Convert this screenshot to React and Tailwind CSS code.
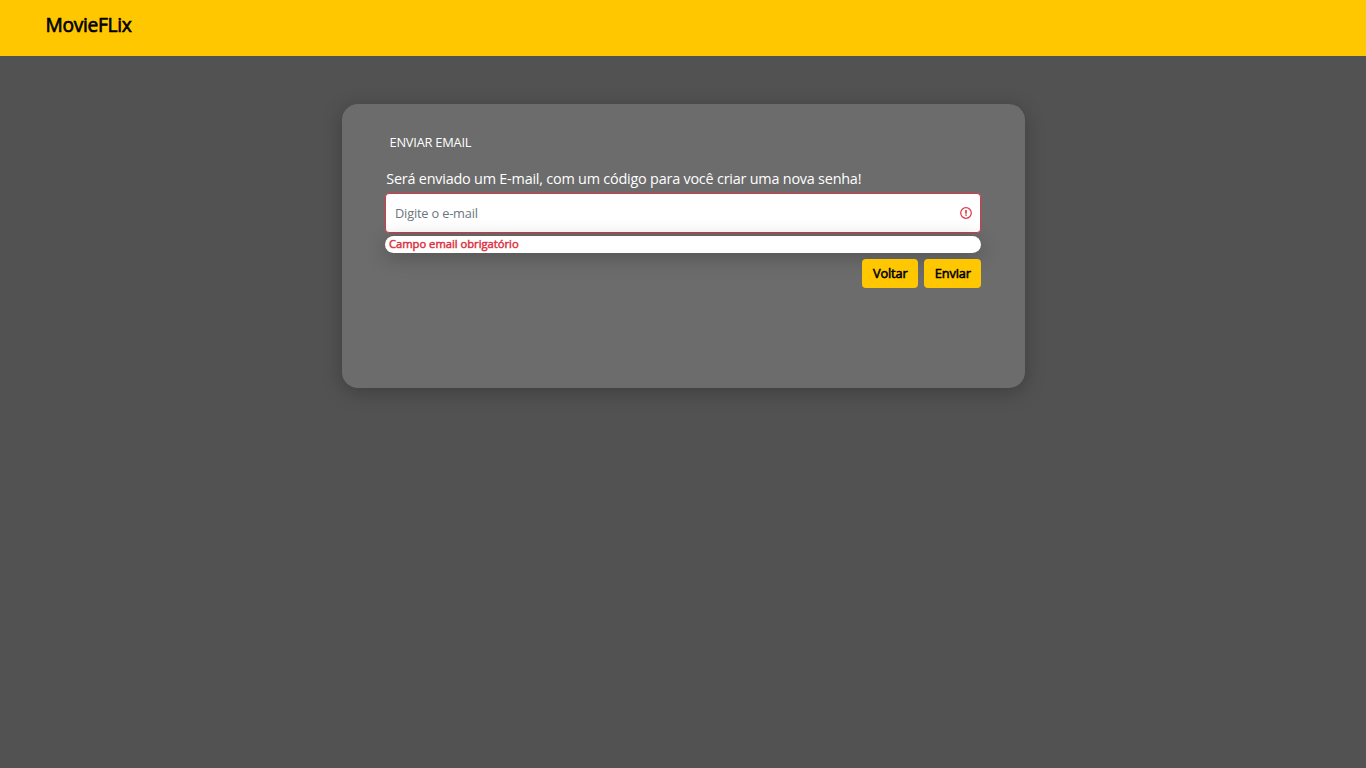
export default function App() {
  return (
    <div className="min-h-screen bg-[#525252] font-['Open_Sans',sans-serif]">
      <header className="h-14 bg-[#ffc700] pl-[45.5px] pt-[10px]">
        <h1 className="w-fit text-[19.2px] leading-[29px] font-normal tracking-[-0.3px] text-black [-webkit-text-stroke:0.65px_#000]">MovieFLix</h1>
      </header>
      <main className="mx-auto mt-12 h-[284px] w-[683px] rounded-[16px] bg-[#6c6c6c] pl-[43px] pr-[44px] pt-[29px] shadow-[0_4px_20px_rgba(0,0,0,0.25)]">
        <h2 className="pl-[5px] text-[12.8px] leading-[19px] tracking-[-0.2px] text-white">ENVIAR EMAIL</h2>
        <p className="mt-[16px] pl-[1.8px] text-[14.4px] leading-[22px] tracking-[-0.21px] text-white">Será enviado um E-mail, com um código para você criar uma nova senha!</p>
        <div className="mt-[3px] ml-[0.5px] flex h-[40px] items-center rounded-[4px] border border-[#dc3545] bg-white pl-[9px] pr-[7px]">
          <input placeholder="Digite o e-mail" className="min-w-0 flex-1 bg-transparent pt-[2px] text-[12.8px] tracking-[-0.18px] outline-none placeholder:text-[#6c757d]" />
          <svg viewBox="0 0 14 14" className="size-[14px]" fill="none" stroke="#dc3545"><circle cx="7" cy="7" r="5.3" strokeWidth="1.2" /><path strokeWidth="1.6" d="M7 4.1v3.6M7 8.5v1.3" /></svg>
        </div>
        <div className="mt-[3px] h-[17px] rounded-[10px] bg-white pl-[4.5px] text-[11.2px] leading-[16px] font-normal text-[#dc3545] shadow-[0_4px_20px_rgba(0,0,0,0.25)] [-webkit-text-stroke:0.5px_#dc3545]">Campo email obrigatório</div>
        <div className="relative mt-[6px] flex justify-end gap-[6px]">
          <button className="h-[29px] w-[56px] rounded-[4px] bg-[#ffc700] pl-[1.5px] text-[12.8px] font-normal tracking-[-0.15px] text-black [-webkit-text-stroke:0.55px_#000]">Voltar</button>
          <button className="h-[29px] w-[57px] rounded-[4px] bg-[#ffc700] pl-[1.5px] text-[12.8px] font-normal tracking-[-0.15px] text-black [-webkit-text-stroke:0.55px_#000]">Enviar</button>
        </div>
      </main>
    </div>
  );
}
